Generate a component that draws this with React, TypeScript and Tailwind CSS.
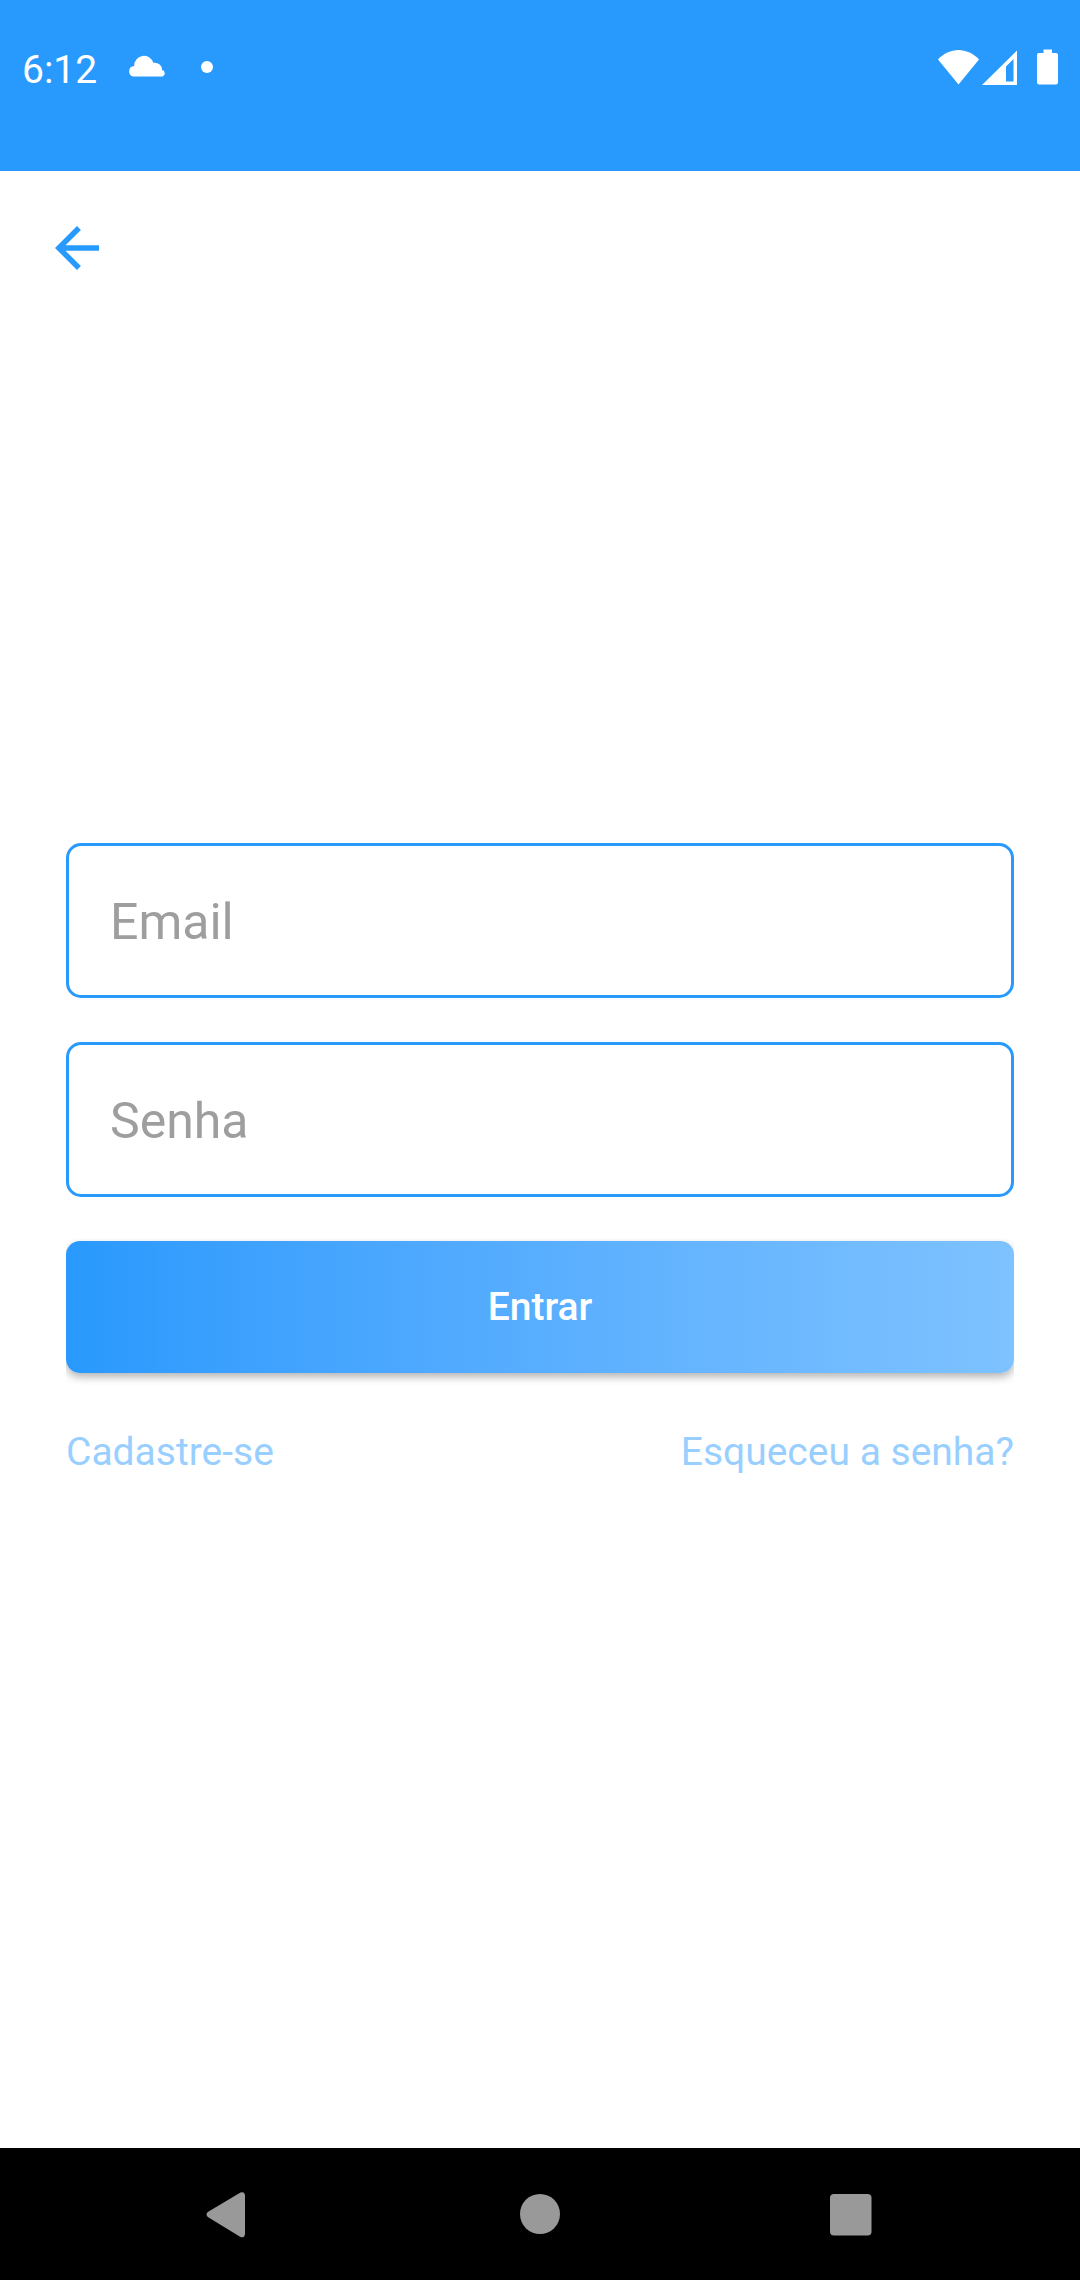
import React from "react";

function StatusBar() {
  return (
    <header className="bg-[#2899fd] px-[22px] pt-[46px] pb-[79px] text-white">
      <div className="flex h-[46px] items-center justify-between">
        <div className="flex items-center">
          <span className="pt-[2px] text-[39px] leading-[46px]">6:12</span>
          <svg className="ml-[31px] h-[46px] w-[38px]" viewBox="0 0 38 46" fill="currentColor" aria-label="Nuvem">
            <path d="M5.500 30.500A5.300 5.300 0 0 1 6.200 20A9.700 9.700 0 0 1 25.200 16.800A7.500 7.500 0 0 1 34.200 24A3.400 3.400 0 0 1 34.500 30.500z" />
          </svg>
          <svg className="ml-[35px] h-[46px] w-3" viewBox="0 0 12 46" fill="currentColor" aria-hidden="true">
            <circle cx="6" cy="21" r="6" />
          </svg>
        </div>
        <div className="flex items-center">
          <svg className="h-[46px] w-[42px]" viewBox="0 0 42 46" fill="currentColor" aria-label="Wi-Fi">
            <path d="M0 13.5C5.500 7.500 13 4 20.500 4S35.500 7.500 41 13.500L20.500 38.500z" />
          </svg>
          <svg className="ml-[2px] h-[46px] w-[35px]" viewBox="0 0 35 46" fill="currentColor" aria-label="Sinal">
            <path fillRule="evenodd" d="M35 4.500V39H0zM31.500 13L24 20.500V35.500H31.500z" />
          </svg>
          <svg className="ml-5 h-[46px] w-[21px]" viewBox="0 0 21 46" fill="currentColor" aria-label="Bateria">
            <path d="M6.500 3.500H15V7H19a2 2 0 0 1 2 2V36.500a2 2 0 0 1-2 2H2a2 2 0 0 1-2-2V9a2 2 0 0 1 2-2H6.500z" />
          </svg>
        </div>
      </div>
    </header>
  );
}

function Field({ id, label, type }: { id: string; label: string; type: string }) {
  return (
    <input
      id={id}
      type={type}
      aria-label={label}
      placeholder={label}
      className="h-[155px] w-full rounded-[15px] border-3 border-[#2899fd] bg-white px-[41px] pt-1 text-[50px] text-gray-800 outline-none placeholder:text-[#9e9e9e]"
    />
  );
}

function LoginForm() {
  return (
    <form
      className="col-start-1 row-start-1 flex flex-col gap-11 self-center px-[66px]"
      onSubmit={(e) => e.preventDefault()}
    >
      <Field id="email" label="Email" type="email" />
      <Field id="senha" label="Senha" type="password" />
      <button
        type="submit"
        className="h-[132px] w-full rounded-[14px] bg-linear-to-r from-[#2899fd] to-[#7ec2ff] pt-[2px] text-[39px] font-medium text-white shadow-[0_4px_8px_rgba(0,0,0,0.3)] [clip-path:inset(-2px_0_-14px_0)]"
      >
        Entrar
      </button>
      <div className="flex justify-between pt-3 pb-[2px] text-[39px] leading-[46px] text-[#99cfff]">
        <a href="#cadastro">Cadastre-se</a>
        <a href="#recuperar">Esqueceu a senha?</a>
      </div>
    </form>
  );
}

function NavigationBar() {
  return (
    <nav className="flex h-[132px] items-center justify-between bg-black px-49 text-[#999999]">
      <button type="button" aria-label="Voltar">
        <svg className="size-[66px]" viewBox="0 0 66 66" fill="currentColor">
          <path d="M12.200 30.700L44.500 11.600Q46 10.700 47.500 11.600Q49 12.500 49 14.500V53Q49 55 47.500 55.900Q46 56.800 44.500 55.900L12.200 36.300Q10.500 35.200 10.500 33.500T12.200 30.700z" />
        </svg>
      </button>
      <button type="button" aria-label="Início">
        <svg className="size-[66px]" viewBox="0 0 66 66" fill="currentColor">
          <circle cx="33" cy="33" r="20" />
        </svg>
      </button>
      <button type="button" aria-label="Recentes">
        <svg className="size-[66px]" viewBox="0 0 66 66" fill="currentColor">
          <rect x="12" y="13" width="41.500" height="41.500" rx="4" />
        </svg>
      </button>
    </nav>
  );
}

export default function App() {
  return (
    <div className="flex min-h-screen flex-col bg-white font-['Roboto',sans-serif]">
      <StatusBar />
      <main className="grid flex-1">
        <button
          type="button"
          aria-label="Voltar"
          className="z-10 col-start-1 row-start-1 m-11 self-start justify-self-start text-[#2899fd]"
        >
          <svg className="size-[66px]" viewBox="0 0 24 24" fill="currentColor">
            <path d="M20 11H7.830l5.590-5.590L12 4l-8 8 8 8 1.410-1.410L7.830 13H20v-2z" />
          </svg>
        </button>
        <LoginForm />
      </main>
      <NavigationBar />
    </div>
  );
}
